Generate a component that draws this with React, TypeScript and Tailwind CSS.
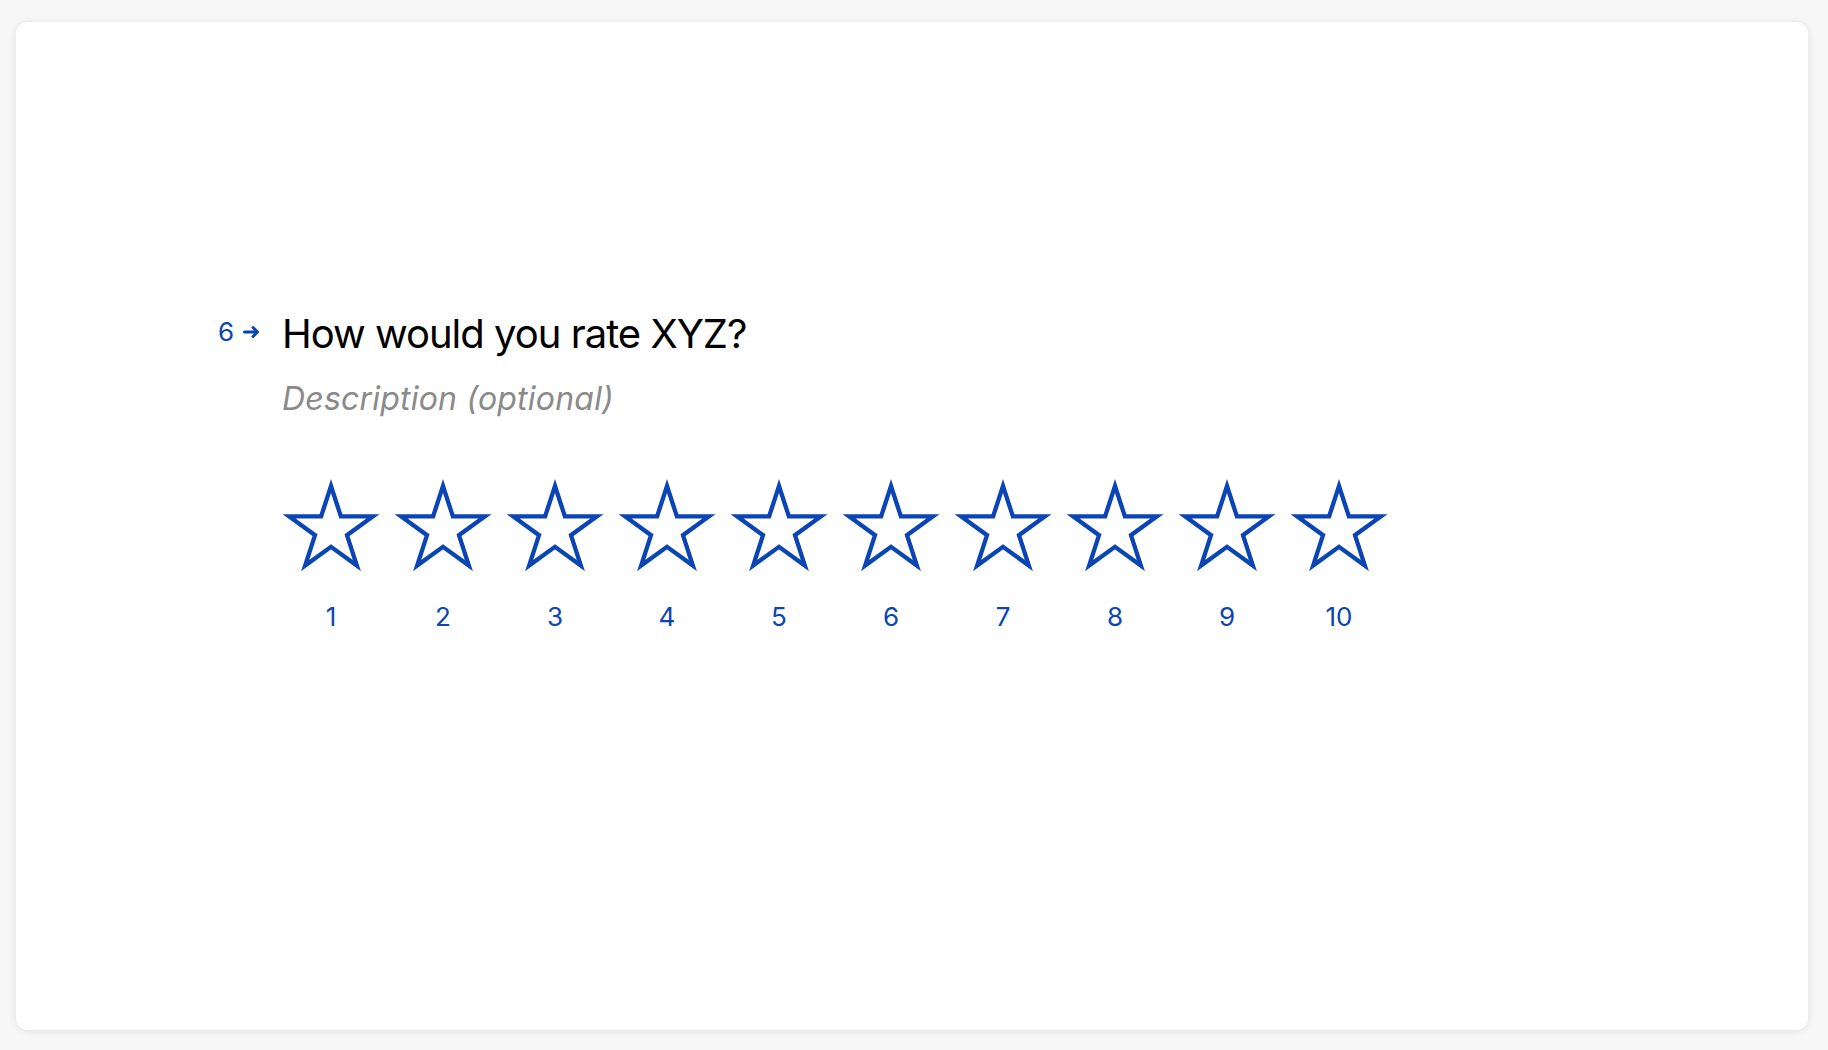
import React from "react";

const BLUE = "#0a45b3";

function Star() {
  const pts =
    "50,7 59.87,37.41 91.85,37.4 65.98,56.19 75.86,86.6 50,67.8 24.14,86.6 34.02,56.19 8.15,37.4 40.13,37.41";
  return (
    <svg width="100" height="92" viewBox="0 0 100 92" className="block">
      <polygon
        points={pts}
        fill="none"
        stroke={BLUE}
        strokeWidth="4.3"
        strokeLinejoin="miter"
        strokeMiterlimit="10"
      />
    </svg>
  );
}

export default function App() {
  const nums = [1, 2, 3, 4, 5, 6, 7, 8, 9, 10];
  return (
    <div
      className="w-[1828px] h-[1050px] bg-[#f7f7f7] pt-[22px] pl-4 pr-5 pb-5"
      style={{ fontFamily: "Inter, 'Noto Sans', sans-serif" }}
    >
      <div className="h-full w-full bg-white rounded-[12px] shadow-[0_1px_8px_rgba(0,0,0,0.10)] pl-[202px] pt-[288px]">
        <div className="flex items-start">
          <div className="w-[64px] h-[32px] mt-[6px] flex items-center text-[#0a45b3]">
            <span className="text-[26px] leading-[32px]">6</span>
            <svg width="20" height="14" viewBox="0 0 20 14" className="ml-[8px]">
              <path
                d="M2.5 7 H15.5 M11 2.5 L15.5 7 L11 11.5"
                fill="none"
                stroke={BLUE}
                strokeWidth="3"
                strokeLinecap="round"
                strokeLinejoin="round"
              />
            </svg>
          </div>
          <div className="flex flex-col">
            <h1 className="text-[40px] leading-[48px] text-black font-normal tracking-[-1px]">
              How would you rate XYZ?
            </h1>
            <p className="mt-[21px] text-[32px] leading-[40px] italic text-[#8a8a8a] tracking-[0.2px]">
              Description (optional)
            </p>
            <div className="mt-[60px] flex gap-[12px] -ml-px">
              {nums.map((n) => (
                <div key={n} className="flex flex-col items-center w-[100px]">
                  <Star />
                  <span className="mt-[30px] text-[26px] leading-[32px] text-[#0a45b3]">
                    {n}
                  </span>
                </div>
              ))}
            </div>
          </div>
        </div>
      </div>
    </div>
  );
}
